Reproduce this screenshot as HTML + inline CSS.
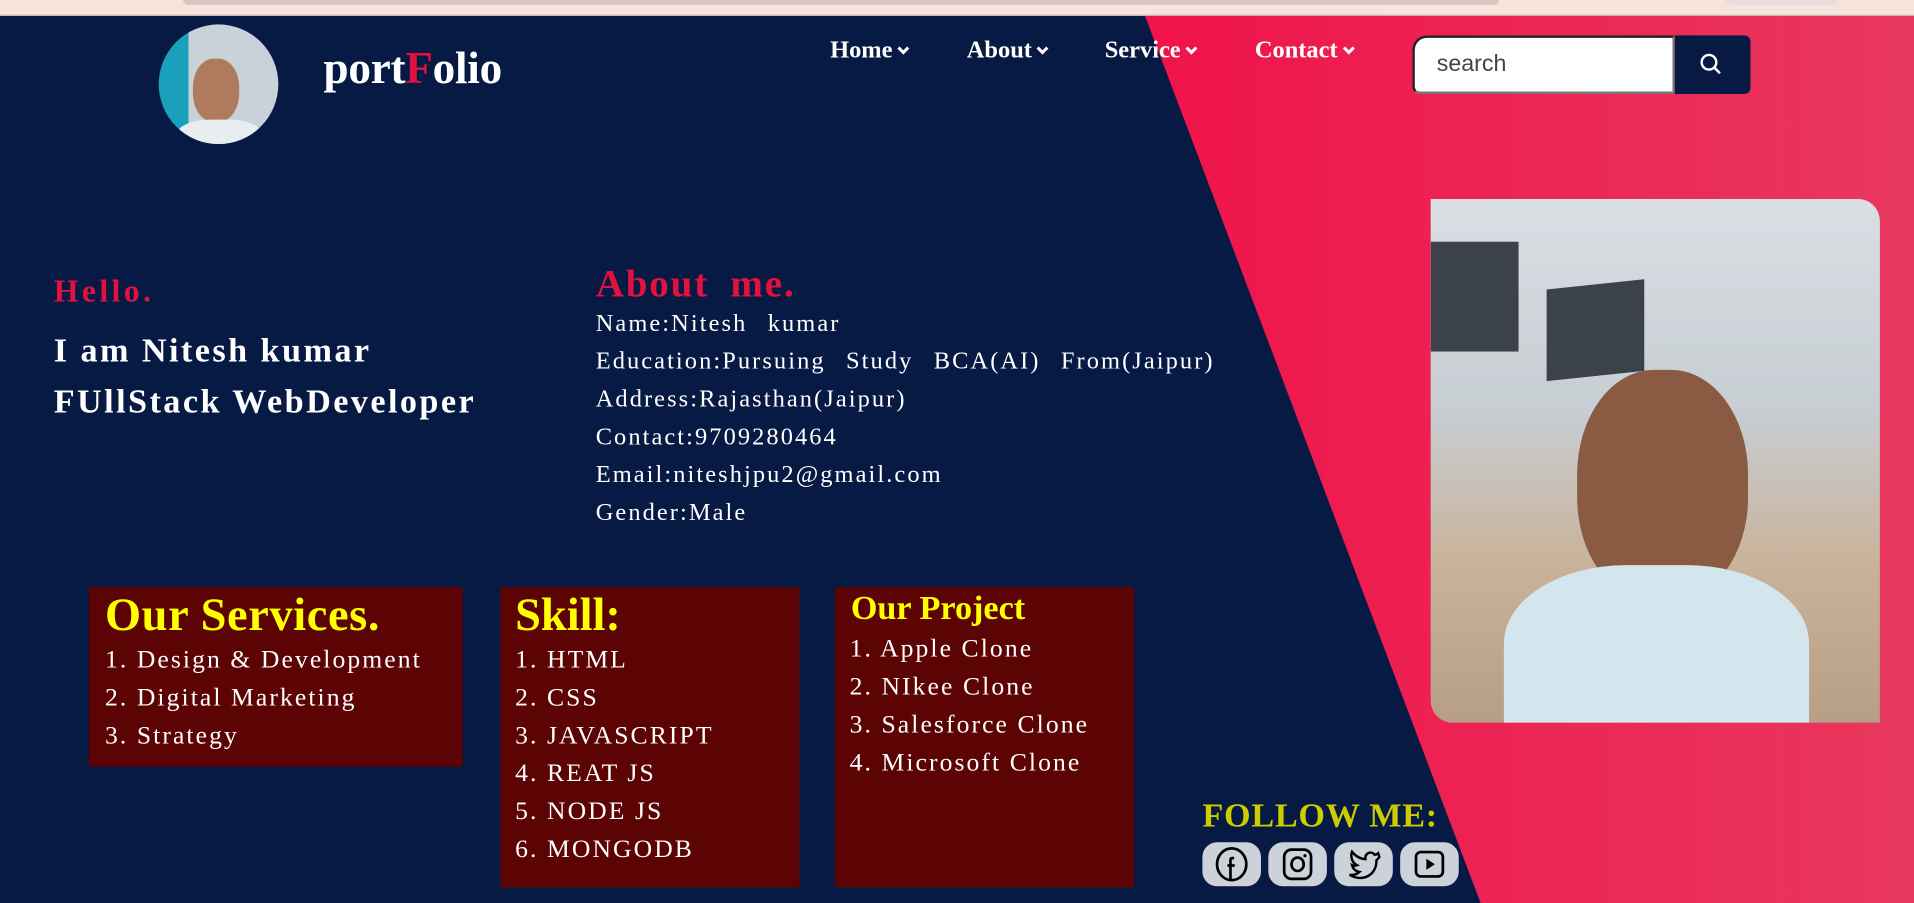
<!DOCTYPE html>
<html><head><meta charset="utf-8"><style>
html,body{margin:0;padding:0;width:1914px;height:903px;overflow:hidden;background:#061a44}
#s{position:absolute;left:0;top:0;width:1568px;height:740px;transform:scale(1.2207);transform-origin:0 0;background:#061a44;font-family:"Liberation Serif",serif;overflow:hidden}
.a{position:absolute}
.nav{color:#fff;font-weight:bold;font-size:20px;top:30px}
.nav svg{width:12px;height:10px;margin-left:3px}
.w{color:#fff}
.box{position:absolute;background:#5c0303;color:#fff;font-size:21px;letter-spacing:1.7px;line-height:31px}
.box .t{color:#ffff00;font-weight:bold;letter-spacing:0}
.ab{font-size:20px;color:#fff;line-height:31px;letter-spacing:1.7px;word-spacing:10px}
.ic{position:absolute;top:690px;width:48px;height:36px;border-radius:12px;background:#cdd1da}
.ic svg{position:absolute;left:9px;top:3px;width:30px;height:30px}
</style></head><body><div id="s">
<div class="a" style="left:0;top:0;width:1568px;height:12px;background:#f5e3dc;border-bottom:1px solid #c9b9b3"></div>
<div class="a" style="left:150px;top:0;width:1078px;height:4px;background:#d8c7c0;border-radius:0 0 6px 6px"></div>
<div class="a" style="left:1414px;top:0;width:92px;height:4px;background:#e8dcdc;border-radius:0 0 6px 6px"></div>
<svg class="a" style="left:0;top:13px" width="1568" height="727"><defs><linearGradient id="g" x1="0" x2="1"><stop offset="0" stop-color="#f0134a"/><stop offset="1" stop-color="#e8385e"/></linearGradient></defs><polygon points="938,0 1568,0 1568,727 1213,727" fill="url(#g)"/></svg>
<div class="a" style="left:130px;top:20px;width:98px;height:98px;border-radius:50%;overflow:hidden;background:linear-gradient(90deg,#1aa0bb 0 25%,#c9d2d8 25%)"><div class="a" style="left:28px;top:28px;width:38px;height:52px;border-radius:45%;background:#b07a5e"></div><div class="a" style="left:15px;top:78px;width:70px;height:30px;border-radius:40%;background:#e8eef0"></div></div>
<div class="a w" style="left:265px;top:35px;font-size:37px;font-weight:bold;letter-spacing:-0.2px">port<span style="color:#e0123f">F</span>olio</div>
<div class="a nav" style="left:680px">Home<svg viewBox="0 0 12 10"><path d="M2 2l4 4 4-4" stroke="#fff" stroke-width="2.5" fill="none"/></svg></div>
<div class="a nav" style="left:792px">About<svg viewBox="0 0 12 10"><path d="M2 2l4 4 4-4" stroke="#fff" stroke-width="2.5" fill="none"/></svg></div>
<div class="a nav" style="left:905px">Service<svg viewBox="0 0 12 10"><path d="M2 2l4 4 4-4" stroke="#fff" stroke-width="2.5" fill="none"/></svg></div>
<div class="a nav" style="left:1028px">Contact<svg viewBox="0 0 12 10"><path d="M2 2l4 4 4-4" stroke="#fff" stroke-width="2.5" fill="none"/></svg></div>
<div class="a" style="left:1157px;top:29px;background:#fff;border:2px solid #222;border-bottom-color:#777;border-right-color:#777;border-radius:12px 0 0 6px;font-family:'Liberation Sans',sans-serif;font-size:19px;color:#444;line-height:44px;padding-left:18px;box-sizing:border-box;width:215px;height:48px">search</div>
<div class="a" style="left:1372px;top:29px;width:62px;height:48px;background:#061a44;border-radius:0 5px 5px 0"><svg class="a" style="left:20px;top:14px" width="20" height="20" viewBox="0 0 20 20"><circle cx="8" cy="8" r="6" stroke="#fff" stroke-width="2" fill="none"/><path d="M12.5 12.5L17 17" stroke="#fff" stroke-width="2"/></svg></div>
<div class="a" style="left:1172px;top:163px;width:368px;height:429px;border-radius:0 18px 0 18px;overflow:hidden;background:linear-gradient(180deg,#d9dfe4 0%,#c7ced3 40%,#c9b29a 70%,#b79f86 100%)">
<div class="a" style="left:0;top:35px;width:72px;height:90px;background:#3c4249"></div>
<div class="a" style="left:95px;top:70px;width:80px;height:75px;background:#3c4249;transform:skewY(-6deg)"></div>
<div class="a" style="left:120px;top:140px;width:140px;height:190px;border-radius:45%;background:#8a5a43"></div>
<div class="a" style="left:60px;top:300px;width:250px;height:160px;border-radius:40% 40% 0 0;background:#d3e6ee"></div></div>
<div class="a" style="left:44px;top:224px;color:#e0123f;font-size:26px;font-weight:bold;letter-spacing:2.8px">Hello.</div>
<div class="a w" style="left:44px;top:267px;font-size:28px;font-weight:bold;letter-spacing:2px;line-height:42px">I am Nitesh kumar<br>FUllStack WebDeveloper</div>
<div class="a" style="left:488px;top:214px;color:#e0123f;font-size:32px;font-weight:bold;letter-spacing:1.5px;word-spacing:8px">About me.</div>
<div class="a ab" style="left:488px;top:250px">Name:Nitesh kumar<br>Education:Pursuing Study BCA(AI) From(Jaipur)<br>Address:Rajasthan(Jaipur)<br>Contact:9709280464<br>Email:niteshjpu2@gmail.com<br>Gender:Male</div>
<div class="box" style="left:73px;top:481px;width:306px;height:147px"><div class="t" style="font-size:38px;letter-spacing:0.5px;line-height:42px;padding:2px 0 0 13px">Our Services.</div><div style="padding-left:13px">1. Design &amp; Development<br>2. Digital Marketing<br>3. Strategy</div></div>
<div class="box" style="left:410px;top:481px;width:245px;height:246px"><div class="t" style="font-size:38px;line-height:42px;padding:2px 0 0 12px">Skill:</div><div style="padding-left:12px">1. HTML<br>2. CSS<br>3. JAVASCRIPT<br>4. REAT JS<br>5. NODE JS<br>6. MONGODB</div></div>
<div class="box" style="left:684px;top:481px;width:245px;height:246px"><div class="t" style="font-size:28px;line-height:34px;padding:1px 0 0 13px">Our Project</div><div style="padding-left:12px">1. Apple Clone<br>2. NIkee Clone<br>3. Salesforce Clone<br>4. Microsoft Clone</div></div>
<div class="a" style="left:985px;top:653px;color:#cccc00;font-size:28px;font-weight:bold;letter-spacing:0.6px">FOLLOW ME:</div>
<div class="ic" style="left:985px"><svg viewBox="0 0 30 30"><ellipse cx="15" cy="15" rx="12" ry="13" stroke="#000" stroke-width="2.2" fill="none"/><path d="M17 10h-1.5c-1 0-1.5.6-1.5 1.6V28M11.5 16h6" stroke="#000" stroke-width="2.2" fill="none"/></svg></div>
<div class="ic" style="left:1039px"><svg viewBox="0 0 30 30"><rect x="4" y="3" width="22" height="24" rx="6" stroke="#000" stroke-width="2.2" fill="none"/><ellipse cx="15" cy="15" rx="5" ry="5.5" stroke="#000" stroke-width="2.2" fill="none"/><circle cx="21" cy="8" r="1.3"/></svg></div>
<div class="ic" style="left:1093px"><svg viewBox="0 0 30 30"><path d="M27 6c-1 .8-2 1-3 1.2-1-1.5-3-2.2-5-1.4-2 1-2.7 3-2.4 5-4.5-.2-8-2.4-11-6-1.5 4 0 9 4 11-1.5.5-3 .5-4 0 .8 3 3 5 6 5.5-2 1.8-5 2.8-8 2.4 10 6 22 1 22-12 1-.8 1.8-1.7 2.4-2.7z" stroke="#000" stroke-width="2" fill="none"/></svg></div>
<div class="ic" style="left:1147px"><svg viewBox="0 0 30 30"><rect x="4" y="5" width="22" height="20" rx="4" stroke="#000" stroke-width="2.2" fill="none"/><path d="M12.5 10.5v9l7-4.5z"/></svg></div>
</div></body></html>
